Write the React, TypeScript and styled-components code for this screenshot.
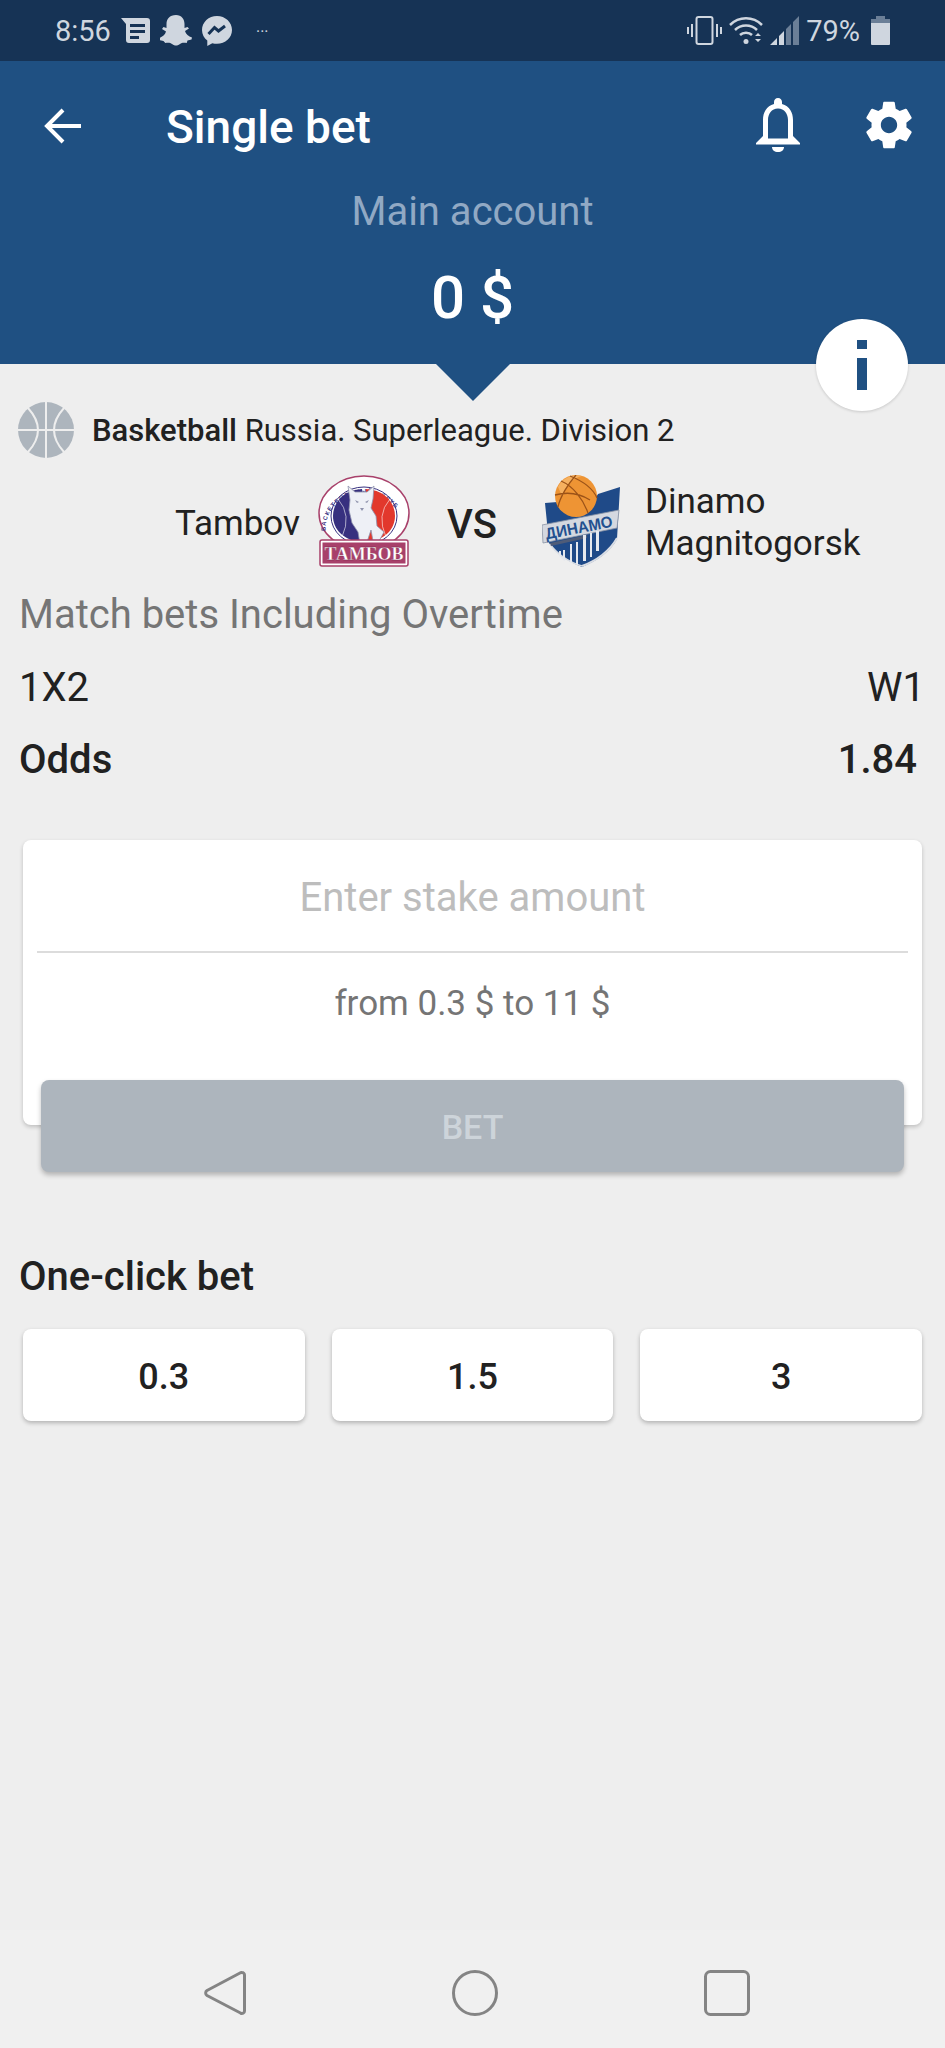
import styled, { createGlobalStyle } from 'styled-components';

const GlobalStyle = createGlobalStyle`
  html, body {
    margin: 0;
    padding: 0;
    background: #eeeeee;
  }
  * {
    box-sizing: border-box;
  }
`;

const Screen = styled.div`
  width: 945px;
  height: 2048px;
  display: flex;
  flex-direction: column;
  position: relative;
  overflow: hidden;
  font-family: 'Roboto', sans-serif;
  background: #eeeeee;
  color: #212121;
`;

const StatusBar = styled.div`
  height: 61px;
  flex-shrink: 0;
  background: #163355;
  color: #cfd6df;
  display: flex;
  align-items: center;
  justify-content: space-between;
  padding: 0 55px;
  font-size: 29px;
`;

const StatusGroup = styled.div<{ $gap: number }>`
  display: flex;
  align-items: center;
  gap: ${({ $gap }) => $gap}px;
`;

const Dots = styled.span`
  font-size: 16px;
  margin: -8px 0 0 14px;
`;

const BatterySlot = styled.span`
  display: flex;
  margin-left: 4px;
`;

const Header = styled.header`
  height: 303px;
  flex-shrink: 0;
  background: #1f5082;
  position: relative;
  color: #fff;
  display: flex;
  flex-direction: column;
  align-items: center;
`;

const Toolbar = styled.div`
  width: 100%;
  height: 130px;
  display: flex;
  align-items: center;
  padding: 0 28px 0 44px;
`;

const Title = styled.h1`
  margin: 2px 0 0 85px;
  font-size: 46px;
  font-weight: 500;
  flex: 1;
`;

const ToolIcons = styled.div`
  display: flex;
  align-items: center;
  gap: 60px;
  margin-top: -2px;
`;

const AccountLabel = styled.div`
  color: #91a9c4;
  font-size: 40px;
  line-height: 44px;
  margin-top: -1px;
`;

const Balance = styled.div`
  font-size: 60px;
  font-weight: 500;
  line-height: 66px;
  margin-top: 31px;
`;

const Pointer = styled.div`
  position: absolute;
  left: 436px;
  top: 100%;
  border-left: 37px solid transparent;
  border-right: 37px solid transparent;
  border-top: 37px solid #1f5082;
`;

const InfoButton = styled.div`
  position: absolute;
  left: 816px;
  top: 258px;
  width: 92px;
  height: 92px;
  border-radius: 50%;
  background: #fff;
  box-shadow: 0 1px 3px rgba(0, 0, 0, 0.16);
  display: flex;
  align-items: center;
  justify-content: center;
`;

const Content = styled.main`
  flex: 1;
  display: flex;
  flex-direction: column;
  padding: 38px 0 0;
`;

const LeagueRow = styled.div`
  display: flex;
  align-items: center;
  gap: 18px;
  padding: 0 18px;
  font-size: 31px;
  height: 56px;
`;

const Strong = styled.b`
  font-weight: 500;
`;

const TeamsRow = styled.div`
  display: flex;
  align-items: center;
  margin-top: 17px;
  height: 92px;
  padding-left: 175px;
`;

const TeamName = styled.div<{ $side: 'left' | 'right' }>`
  font-size: 35px;
  line-height: 42px;
  margin: ${({ $side }) => ($side === 'left' ? '6px 18px 0 0' : '3px 0 0 25px')};
`;

const Versus = styled.div`
  font-size: 40px;
  font-weight: 500;
  width: 132px;
  padding: 6px 8px 0 0;
  text-align: center;
`;

const MarketTitle = styled.div`
  margin: 25px 0 0 19px;
  font-size: 40px;
  line-height: 46px;
  color: #757575;
`;

const InfoRow = styled.div<{ $bold?: boolean; $end: number }>`
  display: flex;
  justify-content: space-between;
  align-items: center;
  height: 46px;
  margin-top: 26px;
  padding: 0 ${({ $end }) => $end}px 0 19px;
  font-size: 40px;
  font-weight: ${({ $bold }) => ($bold ? 500 : 400)};
`;

const StakeCard = styled.section`
  margin: 58px 23px 0;
  height: 285px;
  background: #fff;
  border-radius: 8px;
  box-shadow: 0 2px 4px rgba(0, 0, 0, 0.2);
  padding: 0 14px;
  display: flex;
  flex-direction: column;
  align-items: center;
`;

const StakeField = styled.div`
  width: 100%;
  height: 113px;
  padding-top: 4px;
  border-bottom: 2px solid #dcdcdc;
  display: flex;
  align-items: center;
  justify-content: center;
  font-size: 40px;
  color: #bdbdbd;
`;

const StakeHint = styled.div`
  margin-top: 31px;
  font-size: 35px;
  line-height: 40px;
  color: #757575;
`;

const BetButton = styled.div`
  margin: -45px 41px 0;
  height: 92px;
  flex-shrink: 0;
  position: relative;
  background: #adb5bd;
  border-radius: 8px;
  box-shadow: 0 3px 5px rgba(0, 0, 0, 0.25);
  display: flex;
  align-items: center;
  justify-content: center;
  padding-top: 2px;
  color: #cdd4da;
  font-size: 34px;
  font-weight: 500;
`;

const SectionTitle = styled.div`
  margin: 82px 0 0 19px;
  font-size: 40px;
  line-height: 46px;
  font-weight: 500;
`;

const QuickBets = styled.div`
  display: grid;
  grid-template-columns: repeat(3, 1fr);
  gap: 27px;
  margin: 29px 23px 0;
`;

const QuickBet = styled.div`
  height: 92px;
  padding-top: 3px;
  background: #fff;
  border-radius: 8px;
  box-shadow: 0 2px 4px rgba(0, 0, 0, 0.25);
  display: flex;
  align-items: center;
  justify-content: center;
  font-size: 36px;
  font-weight: 500;
`;

const NavBar = styled.nav`
  height: 118px;
  flex-shrink: 0;
  background: #f0f0f0;
  display: flex;
  align-items: flex-start;
  padding: 40px 0 0 204px;
  gap: 206px;
`;

const BackArrow = () => (
  <svg width="37" height="36" viewBox="0 0 37 36" fill="none" stroke="#fff" strokeWidth="4">
    <path d="M37 18H3M19 2L3 18l16 16" />
  </svg>
);

const BellIcon = () => (
  <svg width="46" height="54" viewBox="0 0 46 54" fill="#fff">
    <path fillRule="evenodd" d="M23 0c2.500 0 4 1.800 4 4v2C34.500 8 38 14.500 38 22v16l7 7v1.500H1V45l7-7V22C8 14.500 11.500 8 19 6V4c0-2.200 1.500-4 4-4zm0 10.500c-6.500 0-10 5.500-10 11.500v18.500h20V22c0-6-3.500-11.500-10-11.500z" />
    <path d="M17 49h12c0 3-2.500 5-6 5s-6-2-6-5z" />
  </svg>
);

const GearIcon = () => (
  <svg width="56" height="56" viewBox="0 0 24 24" fill="#fff">
    <path d="M19.430 12.980c.04-.32.07-.64.07-.98s-.03-.66-.07-.98l2.110-1.650c.19-.15.24-.42.12-.64l-2-3.460c-.12-.22-.39-.3-.61-.22l-2.490 1c-.52-.4-1.080-.73-1.690-.98l-.38-2.650A.488.488 0 0 0 14 2h-4c-.25 0-.46.18-.49.42l-.38 2.650c-.61.25-1.170.59-1.690.98l-2.490-1c-.23-.09-.49 0-.61.22l-2 3.460c-.13.22-.07.49.12.64l2.110 1.650c-.04.32-.07.65-.07.98s.03.66.07.98l-2.110 1.650c-.19.15-.24.42-.12.64l2 3.460c.12.22.39.3.61.22l2.490-1c.52.4 1.080.73 1.690.98l.38 2.650c.03.24.24.42.49.42h4c.25 0 .46-.18.49-.42l.38-2.650c.61-.25 1.170-.59 1.690-.98l2.490 1c.23.09.49 0 .61-.22l2-3.460c.12-.22.07-.49-.12-.64l-2.110-1.650zM12 15.500c-1.930 0-3.500-1.570-3.500-3.500s1.570-3.500 3.500-3.500 3.500 1.570 3.500 3.500-1.570 3.500-3.500 3.500z" />
  </svg>
);

const InfoGlyph = () => (
  <svg width="10" height="50" viewBox="0 0 10 50" fill="#1f5082">
    <rect x="0" y="0" width="10" height="9" />
    <rect x="0" y="18" width="10" height="32" />
  </svg>
);

const MessageIcon = () => (
  <svg width="29" height="25" viewBox="0 0 29 25" fill="#cfd6df">
    <path fillRule="evenodd" d="M0 0h26a3 3 0 0 1 3 3v19a3 3 0 0 1-3 3H8a3 3 0 0 1-3-3V6zM9 6v3h15V6zm0 6v3h15v-3zm0 6v3h9v-3z" />
  </svg>
);

const GhostIcon = () => (
  <svg width="32" height="31" viewBox="0 0 32 31" fill="#cfd6df">
    <path d="M16 0c5.500 0 8.500 4 8.500 9v4l3-1 1.500 1.500-4 2.500c.8 3 3.500 5.500 7 6.500l-.5 2-4 1-.8 2.500c-3-.6-5-.4-6.700 1-1.700 1.200-2.800 1.500-4 1.500s-2.300-.3-4-1.500c-1.700-1.400-3.700-1.600-6.700-1L3.500 26l-4-1-.5-2c3.500-1 6.200-3.500 7-6.500l-4-2.500L3.500 12l3 1V9c0-5 3-9 9.500-9z" />
  </svg>
);

const MessengerIcon = () => (
  <svg width="30" height="30" viewBox="0 0 30 30">
    <path fill="#cfd6df" d="M15 0C6.700 0 0 6.200 0 14c0 4.300 2 8 5.300 10.600V30l5-2.800c1.500.4 3 .6 4.700.6 8.300 0 15-6.100 15-13.800S23.300 0 15 0z" />
    <path fill="none" stroke="#163355" strokeWidth="3" d="M6.500 18l6-6.500 4 3.500 6.500-5" />
  </svg>
);

const VibrateIcon = () => (
  <svg width="35" height="29" viewBox="0 0 35 29" fill="none" stroke="#cfd6df" strokeWidth="2">
    <rect x="9.500" y="1" width="16" height="27" rx="2" />
    <path d="M5 8v13M1 11v7M30 8v13M34 11v7" />
  </svg>
);

const WifiIcon = () => (
  <svg width="34" height="29" viewBox="0 0 34 29" fill="none" stroke="#cfd6df" strokeWidth="2.500">
    <path d="M1 9c9-9 23-9 32 0M6 14c6-6 16-6 22 0M11 19c3-3 9-3 12 0" />
    <circle cx="17" cy="25.500" r="2.500" fill="#cfd6df" stroke="none" />
    <path d="M26 20l3-3 3 3zM26 23l3 3 3-3z" fill="#cfd6df" stroke="none" />
  </svg>
);

const SignalIcon = () => (
  <svg width="29" height="29" viewBox="0 0 29 29">
    <path fill="#cfd6df" d="M0 29l7-7v7zM9 20l5-5v14H9z" />
    <path fill="#6b7f97" d="M16 13l5-5v21h-5zM23 6l6-6v29h-6z" />
  </svg>
);

const BatteryIcon = () => (
  <svg width="19" height="29" viewBox="0 0 19 29">
    <path fill="#6b7f97" d="M5 0h9v3h5v6H0V3h5z" />
    <path fill="#cfd6df" d="M0 7h19v21a1 1 0 0 1-1 1H1a1 1 0 0 1-1-1z" />
  </svg>
);

const BasketballIcon = () => (
  <svg width="56" height="56" viewBox="0 0 56 56">
    <circle cx="28" cy="28" r="28" fill="#adb5bd" />
    <path fill="none" stroke="#eeeeee" strokeWidth="2" d="M0 28h56M28 0v56M10 6Q30 28 10 50M46 6Q26 28 46 50" />
  </svg>
);

const TambovLogo = () => (
  <svg width="92" height="92" viewBox="0 0 92 92">
    <defs>
      <path id="tambov-ring" d="M8 60A38.500 36 0 1 1 84 60" />
    </defs>
    <ellipse cx="46" cy="38" rx="45" ry="37" fill="#fff" stroke="#a8406a" strokeWidth="1.500" />
    <ellipse cx="46" cy="41" rx="33" ry="29" fill="#fff" stroke="#37307f" strokeWidth="1" />
    <text fontFamily="'Liberation Sans', sans-serif" fontWeight="700" fontSize="6" letterSpacing="1" fill="#37307f">
      <textPath href="#tambov-ring" startOffset="4">БАСКЕТБОЛЬНЫЙ · КЛУБ</textPath>
    </text>
    <path fill="#37307f" d="M44 14C26 15 15 27 15 41c0 13 10 24 29 27z" />
    <path fill="#e2382c" d="M48 14c18 1 29 13 29 27 0 13-10 24-29 27z" />
    <path fill="none" stroke="#fff" strokeOpacity="0.65" strokeWidth="0.900" d="M20 24q14 16 4 38M72 24q-14 16-4 38" />
    <path fill="#eef0f6" stroke="#8f93ad" strokeWidth="0.800" d="M30 11l7 6h12l7-6-1 13-2 9 5 8 1 10 7 6-6 11-5-2-2-11-4 12-7 2-2-12-6-9-3-13 1-10z" />
    <path fill="#8f93ad" d="M37 25l4 2-2 1zM51 25l-4 2 2 1zM42 33h4l-2 3zM36 44l5 16M52 48l-3 10" />
    <rect x="2" y="65" width="88" height="26" rx="2" fill="#fff" stroke="#a8406a" strokeWidth="1.500" />
    <rect x="4.500" y="67.500" width="83" height="21" fill="#a8406a" />
    <text x="46" y="84.500" textAnchor="middle" fontFamily="'Liberation Serif', serif" fontWeight="700" fontSize="18" fill="#fff" stroke="#7c2148" strokeWidth="0.300">ТАМБОВ</text>
  </svg>
);

const DinamoLogo = () => (
  <svg width="78" height="92" viewBox="0 0 78 92">
    <path fill="#1f4a88" d="M3 28l50-4 3-5 22-7-3 52c-6 12-20 22-35 28C24 86 12 76 7 68z" />
    <path fill="none" stroke="#d9dde4" strokeWidth="2" d="M40 91c14-5 28-15 35-28" />
    <path fill="none" stroke="#d9dde4" strokeWidth="1.500" d="M8 69c6 9 18 18 32 22" />
    <circle cx="34" cy="21" r="21" fill="#ee9434" />
    <path fill="#f6b160" d="M16 12A21 21 0 0 1 40 1q-14 3-20 20z" />
    <path fill="none" stroke="#9c5318" strokeWidth="1.300" d="M19 6c12 5 22 18 27 32M34 0C26 9 18 22 16 32M13 20c11-3 24-2 35 5M28 1c10 4 22 10 27 22" />
    <path fill="#d4d8e0" stroke="#8993a5" strokeWidth="0.800" d="M0 50l77-15-2 18L1 68z" />
    <text x="38" y="58" textAnchor="middle" textLength="68" lengthAdjust="spacingAndGlyphs" transform="rotate(-11 38 58)" fontFamily="'Liberation Sans', sans-serif" fontWeight="700" fontSize="16" fill="#23508f">ДИНАМО</text>
    <path fill="#4f5c78" d="M8 68l37-8v3l-36 8z" />
    <path fill="#e6e9ef" d="M17 76h2v6h2v-7h2v11l-2-1-2-2-2-2zM28 69h2v19l-2-1zM34 67h2v23l-2-1zM41 60h3v26h-3zM48 58h2v24h-2zM54 56h3v20h-3z" />
  </svg>
);

const BackNav = () => (
  <svg width="42" height="46" viewBox="0 0 42 46" fill="none" stroke="#848484" strokeWidth="3">
    <path strokeLinejoin="round" d="M38 2.500a2.500 2.500 0 0 1 2.500 2.500v36a2.500 2.500 0 0 1-4 2L3 25.500a3 3 0 0 1 0-5L36 3a2.500 2.500 0 0 1 2-.5z" />
  </svg>
);

const HomeNav = () => (
  <svg width="46" height="46" viewBox="0 0 46 46" fill="none" stroke="#848484" strokeWidth="3">
    <circle cx="23" cy="23" r="21.500" />
  </svg>
);

const RecentsNav = () => (
  <svg width="46" height="46" viewBox="0 0 46 46" fill="none" stroke="#848484" strokeWidth="3">
    <rect x="1.500" y="1.500" width="43" height="43" rx="5" />
  </svg>
);

export default function App() {
  const quickStakes = ['0.3', '1.5', '3'];

  return (
    <Screen>
      <GlobalStyle />
      <StatusBar>
        <StatusGroup $gap={10}>
          <span>8:56</span>
          <MessageIcon />
          <GhostIcon />
          <MessengerIcon />
          <Dots>...</Dots>
        </StatusGroup>
        <StatusGroup $gap={7}>
          <VibrateIcon />
          <WifiIcon />
          <SignalIcon />
          <span>79%</span>
          <BatterySlot>
            <BatteryIcon />
          </BatterySlot>
        </StatusGroup>
      </StatusBar>

      <Header>
        <Toolbar>
          <BackArrow />
          <Title>Single bet</Title>
          <ToolIcons>
            <BellIcon />
            <GearIcon />
          </ToolIcons>
        </Toolbar>
        <AccountLabel>Main account</AccountLabel>
        <Balance>0 $</Balance>
        <Pointer />
        <InfoButton>
          <InfoGlyph />
        </InfoButton>
      </Header>

      <Content>
        <LeagueRow>
          <BasketballIcon />
          <span>
            <Strong>Basketball</Strong> Russia. Superleague. Division 2
          </span>
        </LeagueRow>
        <TeamsRow>
          <TeamName $side="left">Tambov</TeamName>
          <TambovLogo />
          <Versus>VS</Versus>
          <DinamoLogo />
          <TeamName $side="right">
            Dinamo
            <br />
            Magnitogorsk
          </TeamName>
        </TeamsRow>
        <MarketTitle>Match bets Including Overtime</MarketTitle>
        <InfoRow $end={20}>
          <span>1X2</span>
          <span>W1</span>
        </InfoRow>
        <InfoRow $bold $end={28}>
          <span>Odds</span>
          <span>1.84</span>
        </InfoRow>
        <StakeCard>
          <StakeField>Enter stake amount</StakeField>
          <StakeHint>from 0.3 $ to 11 $</StakeHint>
        </StakeCard>
        <BetButton>BET</BetButton>
        <SectionTitle>One-click bet</SectionTitle>
        <QuickBets>
          {quickStakes.map((stake) => (
            <QuickBet key={stake}>{stake}</QuickBet>
          ))}
        </QuickBets>
      </Content>

      <NavBar>
        <BackNav />
        <HomeNav />
        <RecentsNav />
      </NavBar>
    </Screen>
  );
}
